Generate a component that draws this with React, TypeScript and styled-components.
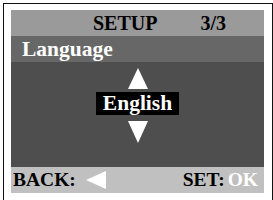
import React from "react";
import styled, { createGlobalStyle } from "styled-components";

const GlobalStyle = createGlobalStyle`
  html, body {
    margin: 0;
    padding: 0;
    background: #ffffff;
    overflow: hidden;
  }
`;

const Frame = styled.div`
  margin: 3px 0 0 3px;
  width: 257px;
  height: 190px;
  border: 1px solid #111;
  border-bottom: none;
  padding: 6px 4px 0 7px;
`;

const Screen = styled.div`
  width: 253px;
  display: flex;
  flex-direction: column;
  font-family: "Liberation Serif", "Times New Roman", serif;
  font-weight: bold;
`;

const Bar = styled.div<{ $bg: string; $color: string }>`
  height: 26px;
  background: ${(p) => p.$bg};
  color: ${(p) => p.$color};
  display: flex;
  align-items: center;
  box-sizing: border-box;
  white-space: nowrap;
`;

const TitleBar = styled(Bar)`
  font-size: 20px;
  padding-left: 82px;
`;

const PageNo = styled.span`
  margin-left: 43px;
`;

const HeadBar = styled(Bar)`
  font-size: 21.5px;
  padding-left: 11px;
`;

const Body = styled.div`
  height: 105px;
  background: #4e4e4e;
  display: flex;
  flex-direction: column;
  align-items: center;
  padding-top: 6px;
  box-sizing: border-box;
`;

const Value = styled.div`
  margin: 3px 0 6px;
  height: 23px;
  padding: 0 7px;
  background: #000;
  color: #fff;
  font-size: 21.5px;
  display: flex;
  align-items: center;
`;

const FootBar = styled(Bar)`
  font-size: 19.5px;
  padding: 0 6px 0 2px;
  justify-content: space-between;
`;

const Group = styled.div`
  display: flex;
  align-items: center;
  gap: 10px;
`;

const Ok = styled.span`
  color: #fff;
  margin-left: -7px;
`;

const Triangle = ({ dir, w, h }: { dir: "up" | "down" | "left"; w: number; h: number }) => {
  const pts =
    dir === "up"
      ? `${w / 2},0 ${w},${h} 0,${h}`
      : dir === "down"
      ? `0,0 ${w},0 ${w / 2},${h}`
      : `0,${h / 2} ${w},0 ${w},${h}`;
  return (
    <svg width={w} height={h} viewBox={`0 0 ${w} ${h}`} style={{ display: "block" }}>
      <polygon points={pts} fill="#fff" />
    </svg>
  );
};

export default function App() {
  return (
    <>
      <GlobalStyle />
      <Frame>
        <Screen>
          <TitleBar $bg="#9a9a9a" $color="#000">
            SETUP<PageNo>3/3</PageNo>
          </TitleBar>
          <HeadBar $bg="#676767" $color="#fff">
            Language
          </HeadBar>
          <Body>
            <Triangle dir="up" w={20} h={21} />
            <Value>English</Value>
            <Triangle dir="down" w={20} h={22} />
          </Body>
          <FootBar $bg="#c0c0c0" $color="#000">
            <Group>
              BACK:
              <Triangle dir="left" w={20} h={18} />
            </Group>
            <Group>
              SET: <Ok>OK</Ok>
            </Group>
          </FootBar>
        </Screen>
      </Frame>
    </>
  );
}
